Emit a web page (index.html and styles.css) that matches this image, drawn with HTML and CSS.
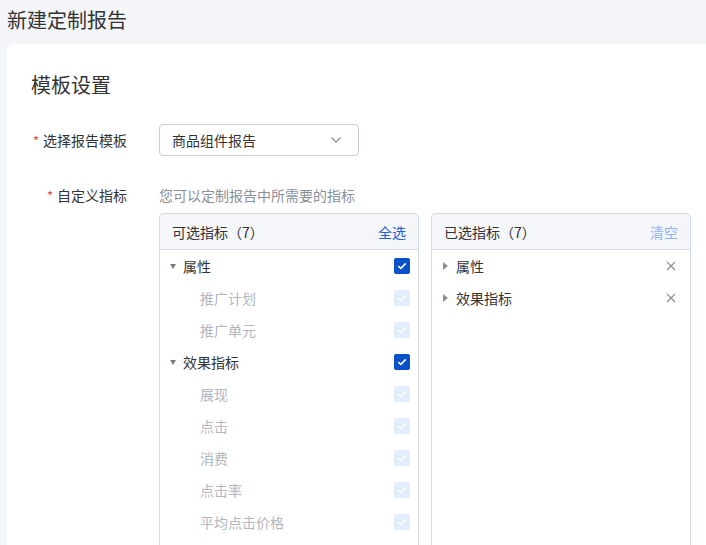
FILE: index.html
```html
<!DOCTYPE html>
<html lang="zh-CN">
<head>
<meta charset="utf-8">
<title>新建定制报告</title>
<link rel="stylesheet" href="styles.css">
</head>
<body>
<div class="page">
  <h1 class="page-title">新建定制报告</h1>
  <div class="card">
    <h2 class="section-title">模板设置</h2>
    <div class="form">
      <div class="form-row">
        <label class="form-label"><span class="req">*</span>选择报告模板</label>
        <div class="form-control">
          <div class="select">
            <span class="select-value">商品组件报告</span>
            <svg class="chevron" width="12" height="8" viewBox="0 0 12 8"><path d="M1.5 1.5 L6 6 L10.5 1.5" fill="none" stroke="#8a8f99" stroke-width="1.2"/></svg>
          </div>
        </div>
      </div>
      <div class="form-row metrics-row">
        <label class="form-label"><span class="req">*</span>自定义指标</label>
        <div class="form-control">
          <div class="hint">您可以定制报告中所需要的指标</div>
          <div class="transfer">
            <div class="panel">
              <div class="panel-head">
                <span class="panel-title">可选指标（7）</span>
                <a class="link">全选</a>
              </div>
              <ul class="list">
                <li class="item group">
                  <span class="tri-down"></span><span class="name">属性</span>
                  <span class="cb on"><svg width="10" height="8" viewBox="0 0 10 8"><path d="M1.2 4 L3.8 6.4 L8.8 1.4" fill="none" stroke="#fff" stroke-width="1.6"/></svg></span>
                </li>
                <li class="item sub"><span class="name">推广计划</span>
                  <span class="cb dis"><svg width="10" height="8" viewBox="0 0 10 8"><path d="M1.2 4 L3.8 6.4 L8.8 1.4" fill="none" stroke="#fff" stroke-width="1.6"/></svg></span></li>
                <li class="item sub"><span class="name">推广单元</span>
                  <span class="cb dis"><svg width="10" height="8" viewBox="0 0 10 8"><path d="M1.2 4 L3.8 6.4 L8.8 1.4" fill="none" stroke="#fff" stroke-width="1.6"/></svg></span></li>
                <li class="item group">
                  <span class="tri-down"></span><span class="name">效果指标</span>
                  <span class="cb on"><svg width="10" height="8" viewBox="0 0 10 8"><path d="M1.2 4 L3.8 6.4 L8.8 1.4" fill="none" stroke="#fff" stroke-width="1.6"/></svg></span>
                </li>
                <li class="item sub"><span class="name">展现</span>
                  <span class="cb dis"><svg width="10" height="8" viewBox="0 0 10 8"><path d="M1.2 4 L3.8 6.4 L8.8 1.4" fill="none" stroke="#fff" stroke-width="1.6"/></svg></span></li>
                <li class="item sub"><span class="name">点击</span>
                  <span class="cb dis"><svg width="10" height="8" viewBox="0 0 10 8"><path d="M1.2 4 L3.8 6.4 L8.8 1.4" fill="none" stroke="#fff" stroke-width="1.6"/></svg></span></li>
                <li class="item sub"><span class="name">消费</span>
                  <span class="cb dis"><svg width="10" height="8" viewBox="0 0 10 8"><path d="M1.2 4 L3.8 6.4 L8.8 1.4" fill="none" stroke="#fff" stroke-width="1.6"/></svg></span></li>
                <li class="item sub"><span class="name">点击率</span>
                  <span class="cb dis"><svg width="10" height="8" viewBox="0 0 10 8"><path d="M1.2 4 L3.8 6.4 L8.8 1.4" fill="none" stroke="#fff" stroke-width="1.6"/></svg></span></li>
                <li class="item sub"><span class="name">平均点击价格</span>
                  <span class="cb dis"><svg width="10" height="8" viewBox="0 0 10 8"><path d="M1.2 4 L3.8 6.4 L8.8 1.4" fill="none" stroke="#fff" stroke-width="1.6"/></svg></span></li>
              </ul>
            </div>
            <div class="panel">
              <div class="panel-head">
                <span class="panel-title">已选指标（7）</span>
                <a class="link light">清空</a>
              </div>
              <ul class="list">
                <li class="item sel">
                  <span class="tri-right"></span><span class="name">属性</span>
                  <svg class="close" width="10" height="10" viewBox="0 0 10 10"><path d="M1 1 L9 9 M9 1 L1 9" stroke="#8a8f99" stroke-width="1.2"/></svg>
                </li>
                <li class="item sel">
                  <span class="tri-right"></span><span class="name">效果指标</span>
                  <svg class="close" width="10" height="10" viewBox="0 0 10 10"><path d="M1 1 L9 9 M9 1 L1 9" stroke="#8a8f99" stroke-width="1.2"/></svg>
                </li>
              </ul>
            </div>
          </div>
        </div>
      </div>
    </div>
  </div>
</div>
</body>
</html>
```

FILE: styles.css
```css
* { box-sizing: border-box; }
html, body {
  margin: 0;
  padding: 0;
  height: 100%;
  overflow: hidden;
}
body {
  background: #f4f5f9;
  font-family: "Noto Sans CJK SC", "Noto Sans", sans-serif;
  color: #333;
  font-size: 14px;
}
.page { padding-left: 7px; }
.page-title {
  margin: 0;
  height: 44px;
  line-height: 40px;
  font-size: 20px;
  font-weight: 400;
  color: #333;
}
.card {
  background: #fff;
  border-radius: 6px 0 0 0;
  padding: 30px 0 0 24px;
  min-height: 600px;
}
.section-title {
  margin: 0;
  font-size: 20px;
  font-weight: 400;
  line-height: 22px;
  color: #333;
}
.form { margin-top: 28px; }
.form-row {
  display: flex;
  gap: 32px;
  align-items: flex-start;
}
.form-label {
  width: 96px;
  flex: none;
  text-align: right;
  line-height: 32px;
  color: #333;
  white-space: nowrap;
}
.req {
  color: #e5483d;
  margin-right: 4px;
  font-size: 13px;
}
.select {
  width: 200px;
  height: 32px;
  border: 1px solid #c9ced8;
  border-radius: 4px;
  display: flex;
  align-items: center;
  justify-content: space-between;
  padding: 0 16px 0 12px;
}
.select-value { color: #333; }
.metrics-row { margin-top: 23px; }
.metrics-row .form-label { line-height: 30px; }
.hint {
  line-height: 30px;
  color: #8a8f99;
}
.transfer {
  display: flex;
  gap: 12px;
  margin-top: 3px;
}
.panel {
  width: 260px;
  border: 1px solid #d5dae4;
  border-radius: 4px;
  min-height: 360px;
}
.panel-head {
  height: 36px;
  background: #f5f6fa;
  border-bottom: 1px solid #d5dae4;
  border-radius: 4px 4px 0 0;
  display: flex;
  align-items: center;
  justify-content: space-between;
  padding: 0 12px;
}
.panel-title { color: #333; }
.link { color: #1b5fd7; cursor: pointer; }
.link.light { color: #8db3f2; }
.list {
  list-style: none;
  margin: 0;
  padding: 0;
}
.item {
  height: 32px;
  display: flex;
  align-items: center;
  padding: 0 8px 0 10px;
}
.item .name { flex: 1; }
.item.sub { padding-left: 40px; }
.item.sub .name { color: #b1b6c0; }
.tri-down {
  width: 0;
  height: 0;
  border-left: 3.5px solid transparent;
  border-right: 3.5px solid transparent;
  border-top: 5px solid #777c86;
  margin-right: 7px;
}
.tri-right {
  width: 0;
  height: 0;
  border-top: 4px solid transparent;
  border-bottom: 4px solid transparent;
  border-left: 5px solid #8a8f99;
  margin-right: 8px;
}
.item.sel { padding: 0 14px 0 11px; }
.cb {
  width: 16px;
  height: 16px;
  border-radius: 2px;
  display: flex;
  align-items: center;
  justify-content: center;
}
.cb.on { background: #0a52cc; }
.cb.dis { background: #e3ecfc; }
```
